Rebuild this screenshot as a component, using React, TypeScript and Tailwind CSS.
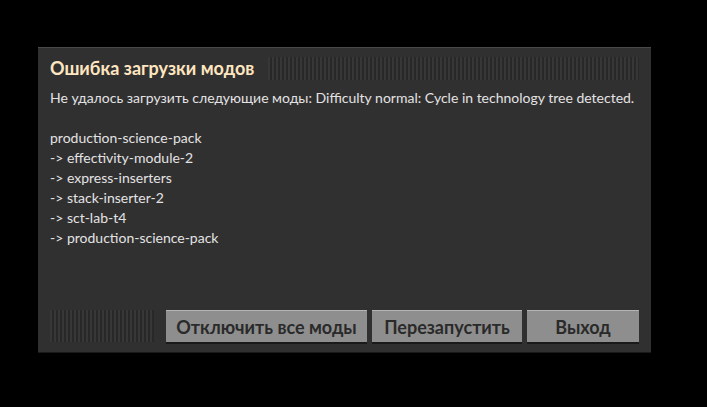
import React from "react";

const stripes =
  "bg-[repeating-linear-gradient(90deg,#383737_0px,#383737_2px,#292828_2px,#292828_4px)]";

export default function App() {
  const lines = [
    "production-science-pack",
    "-> effectivity-module-2",
    "-> express-inserters",
    "-> stack-inserter-2",
    "-> sct-lab-t4",
    "-> production-science-pack",
  ];
  return (
    <div className="w-[707px] h-[407px] bg-black flex items-start" style={{ fontFamily: "Lato, 'Noto Sans', sans-serif" }}>
      <div className="ml-[38px] mt-[47px] w-[613px] h-[305px] bg-[#313031] border-t border-t-[#4a4949] shadow-[0_1px_0_#1a1a1a] flex flex-col px-[12px]">
        <div className="flex items-center mt-[8px] h-[24px] gap-[14px]">
          <div className="text-[18px] font-bold text-[#ffe6c0] leading-none whitespace-nowrap">Ошибка загрузки модов</div>
          <div className={`flex-1 h-[23px] ${stripes}`}></div>
        </div>
        <div className="mt-[8px] text-[14px] leading-[20px] text-[#e3e3e3] whitespace-nowrap">
          <div>Не удалось загрузить следующие моды: Difficulty normal: Cycle in technology tree detected.</div>
          <div className="h-[20px]"></div>
          {lines.map((l) => (
            <div key={l}>{l}</div>
          ))}
        </div>
        <div className="flex-1"></div>
        <div className="flex items-stretch h-[32px] mb-[10px] gap-[5px]">
          <div className={`w-[104px] mr-[7px] ${stripes}`}></div>
          <button className="w-[201px] bg-[#8e8e8e] border-t border-t-[#b4b4b4] shadow-[0_2px_0_#1b1a1a] text-[18px] font-bold text-[#2a2a2a] leading-none">Отключить все моды</button>
          <button className="w-[150px] bg-[#8e8e8e] border-t border-t-[#b4b4b4] shadow-[0_2px_0_#1b1a1a] text-[18px] font-bold text-[#2a2a2a] leading-none">Перезапустить</button>
          <button className="w-[112px] bg-[#8e8e8e] border-t border-t-[#b4b4b4] shadow-[0_2px_0_#1b1a1a] text-[18px] font-bold text-[#2a2a2a] leading-none">Выход</button>
        </div>
      </div>
    </div>
  );
}
